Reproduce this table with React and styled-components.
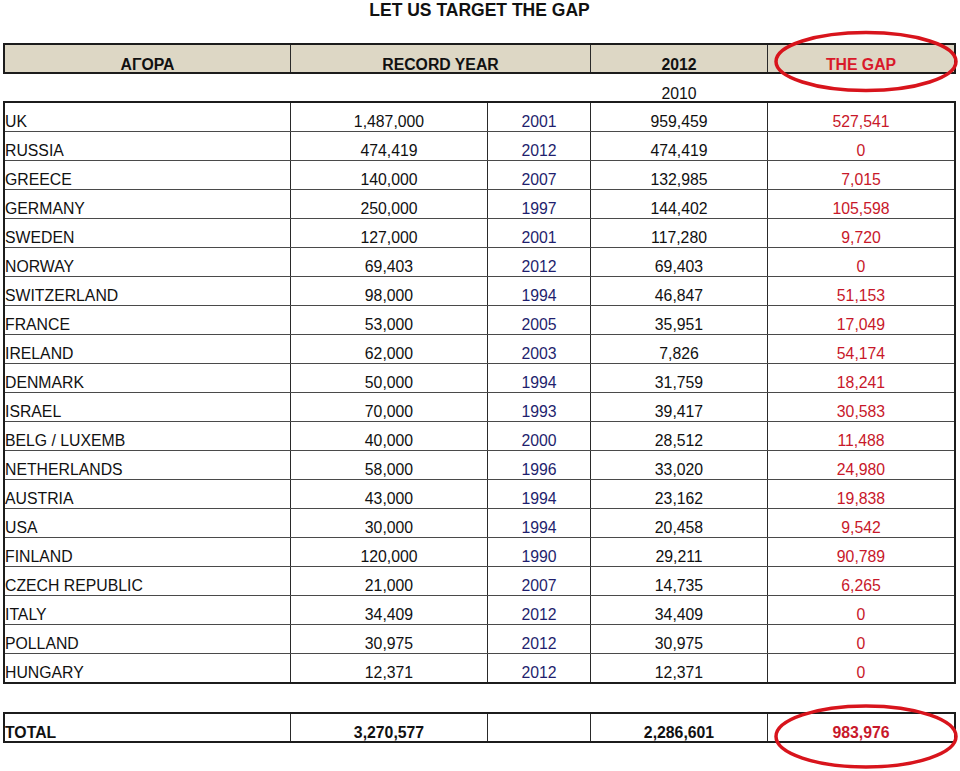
import React from "react";
import styled, { createGlobalStyle } from "styled-components";

const Global = createGlobalStyle`
  html, body { margin: 0; padding: 0; background: #fff; }
  body { font-family: "Liberation Sans", Arial, sans-serif; color: #111; }
`;

const Page = styled.div`
  position: relative;
  width: 960px;
  height: 771px;
  overflow: hidden;
  padding: 0 4px 0 3px;
  box-sizing: border-box;
`;

const Title = styled.h1`
  margin: 0;
  height: 20px;
  line-height: 21px;
  font-size: 17.5px;
  font-weight: bold;
  text-align: center;
  color: #111;
`;

const Table = styled.div`
  border: 2px solid #1c1c1c;
  margin-top: ${(p) => p.$mt || 0}px;
  background: ${(p) => p.$bg || "#fff"};
`;

const Row = styled.div`
  display: grid;
  grid-template-columns: ${(p) => p.$cols};
  height: ${(p) => p.$h}px;
  border-top: ${(p) => (p.$first ? "none" : "1px solid #4a4a4a")};
`;

const Cell = styled.div`
  display: flex;
  align-items: flex-end;
  justify-content: ${(p) => (p.$left ? "flex-start" : "center")};
  border-left: ${(p) => (p.$first ? "none" : p.$noLine ? "1px solid transparent" : "1px solid #2a2a2a")};
  padding-bottom: ${(p) => p.$pb ?? 1}px;
  font-size: 15.8px;
  line-height: ${(p) => p.$lh ?? 16}px;
  font-weight: ${(p) => (p.$bold ? "bold" : "normal")};
  color: ${(p) => p.$color || "#111"};
  white-space: nowrap;
  overflow: hidden;
`;

const SubRow = styled.div`
  display: grid;
  grid-template-columns: 287px 300px 177px 1fr;
  height: 27px;
`;

const Overlay = styled.svg`
  position: absolute;
  left: 0;
  top: 0;
  pointer-events: none;
`;

const HEAD_COLS = "285px 300px 177px 1fr";
const DATA_COLS = "285px 197px 103px 177px 1fr";
const NAVY = "#1f1f6e";
const RED = "#c8182a";

const data = [
  ["UK", "1,487,000", "2001", "959,459", "527,541"],
  ["RUSSIA", "474,419", "2012", "474,419", "0"],
  ["GREECE", "140,000", "2007", "132,985", "7,015"],
  ["GERMANY", "250,000", "1997", "144,402", "105,598"],
  ["SWEDEN", "127,000", "2001", "117,280", "9,720"],
  ["NORWAY", "69,403", "2012", "69,403", "0"],
  ["SWITZERLAND", "98,000", "1994", "46,847", "51,153"],
  ["FRANCE", "53,000", "2005", "35,951", "17,049"],
  ["IRELAND", "62,000", "2003", "7,826", "54,174"],
  ["DENMARK", "50,000", "1994", "31,759", "18,241"],
  ["ISRAEL", "70,000", "1993", "39,417", "30,583"],
  ["BELG / LUXEMB", "40,000", "2000", "28,512", "11,488"],
  ["NETHERLANDS", "58,000", "1996", "33,020", "24,980"],
  ["AUSTRIA", "43,000", "1994", "23,162", "19,838"],
  ["USA", "30,000", "1994", "20,458", "9,542"],
  ["FINLAND", "120,000", "1990", "29,211", "90,789"],
  ["CZECH REPUBLIC", "21,000", "2007", "14,735", "6,265"],
  ["ITALY", "34,409", "2012", "34,409", "0"],
  ["POLLAND", "30,975", "2012", "30,975", "0"],
  ["HUNGARY", "12,371", "2012", "12,371", "0"],
];

export default function App() {
  return (
    <>
      <Global />
      <Page>
        <Title>LET US TARGET THE GAP</Title>

        <Table $mt={23} $bg="#ddd7c5">
          <Row $first $cols={HEAD_COLS} $h={27}>
            <Cell $first $bold $pb={0} $lh={14}>ΑΓΟΡΑ</Cell>
            <Cell $bold $pb={0} $lh={14}>RECORD YEAR</Cell>
            <Cell $bold $pb={0} $lh={14}>2012</Cell>
            <Cell $bold $pb={0} $lh={14} $color="#d9192a">THE GAP</Cell>
          </Row>
        </Table>

        <SubRow>
          <Cell $first />
          <Cell $noLine />
          <Cell $noLine $pb={0} $lh={14}>2010</Cell>
          <Cell $noLine />
        </SubRow>

        <Table>
          {data.map((r, i) => (
            <Row key={r[0]} $first={i === 0} $cols={DATA_COLS} $h={28}>
              <Cell $first $left>{r[0]}</Cell>
              <Cell>{r[1]}</Cell>
              <Cell $color={NAVY}>{r[2]}</Cell>
              <Cell>{r[3]}</Cell>
              <Cell $color={RED}>{r[4]}</Cell>
            </Row>
          ))}
        </Table>

        <Table $mt={28}>
          <Row $first $cols={DATA_COLS} $h={27}>
            <Cell $first $left $bold $pb={0}>TOTAL</Cell>
            <Cell $bold $pb={0}>3,270,577</Cell>
            <Cell />
            <Cell $bold $pb={0}>2,286,601</Cell>
            <Cell $bold $pb={0} $color={RED}>983,976</Cell>
          </Row>
        </Table>

        <Overlay width="960" height="771" viewBox="0 0 960 771">
          <ellipse cx="866" cy="61.5" rx="90" ry="29" fill="none" stroke="#d8141c" strokeWidth="3.5" />
          <ellipse cx="866" cy="736.5" rx="90" ry="30.5" fill="none" stroke="#d8141c" strokeWidth="3.5" />
        </Overlay>
      </Page>
    </>
  );
}
